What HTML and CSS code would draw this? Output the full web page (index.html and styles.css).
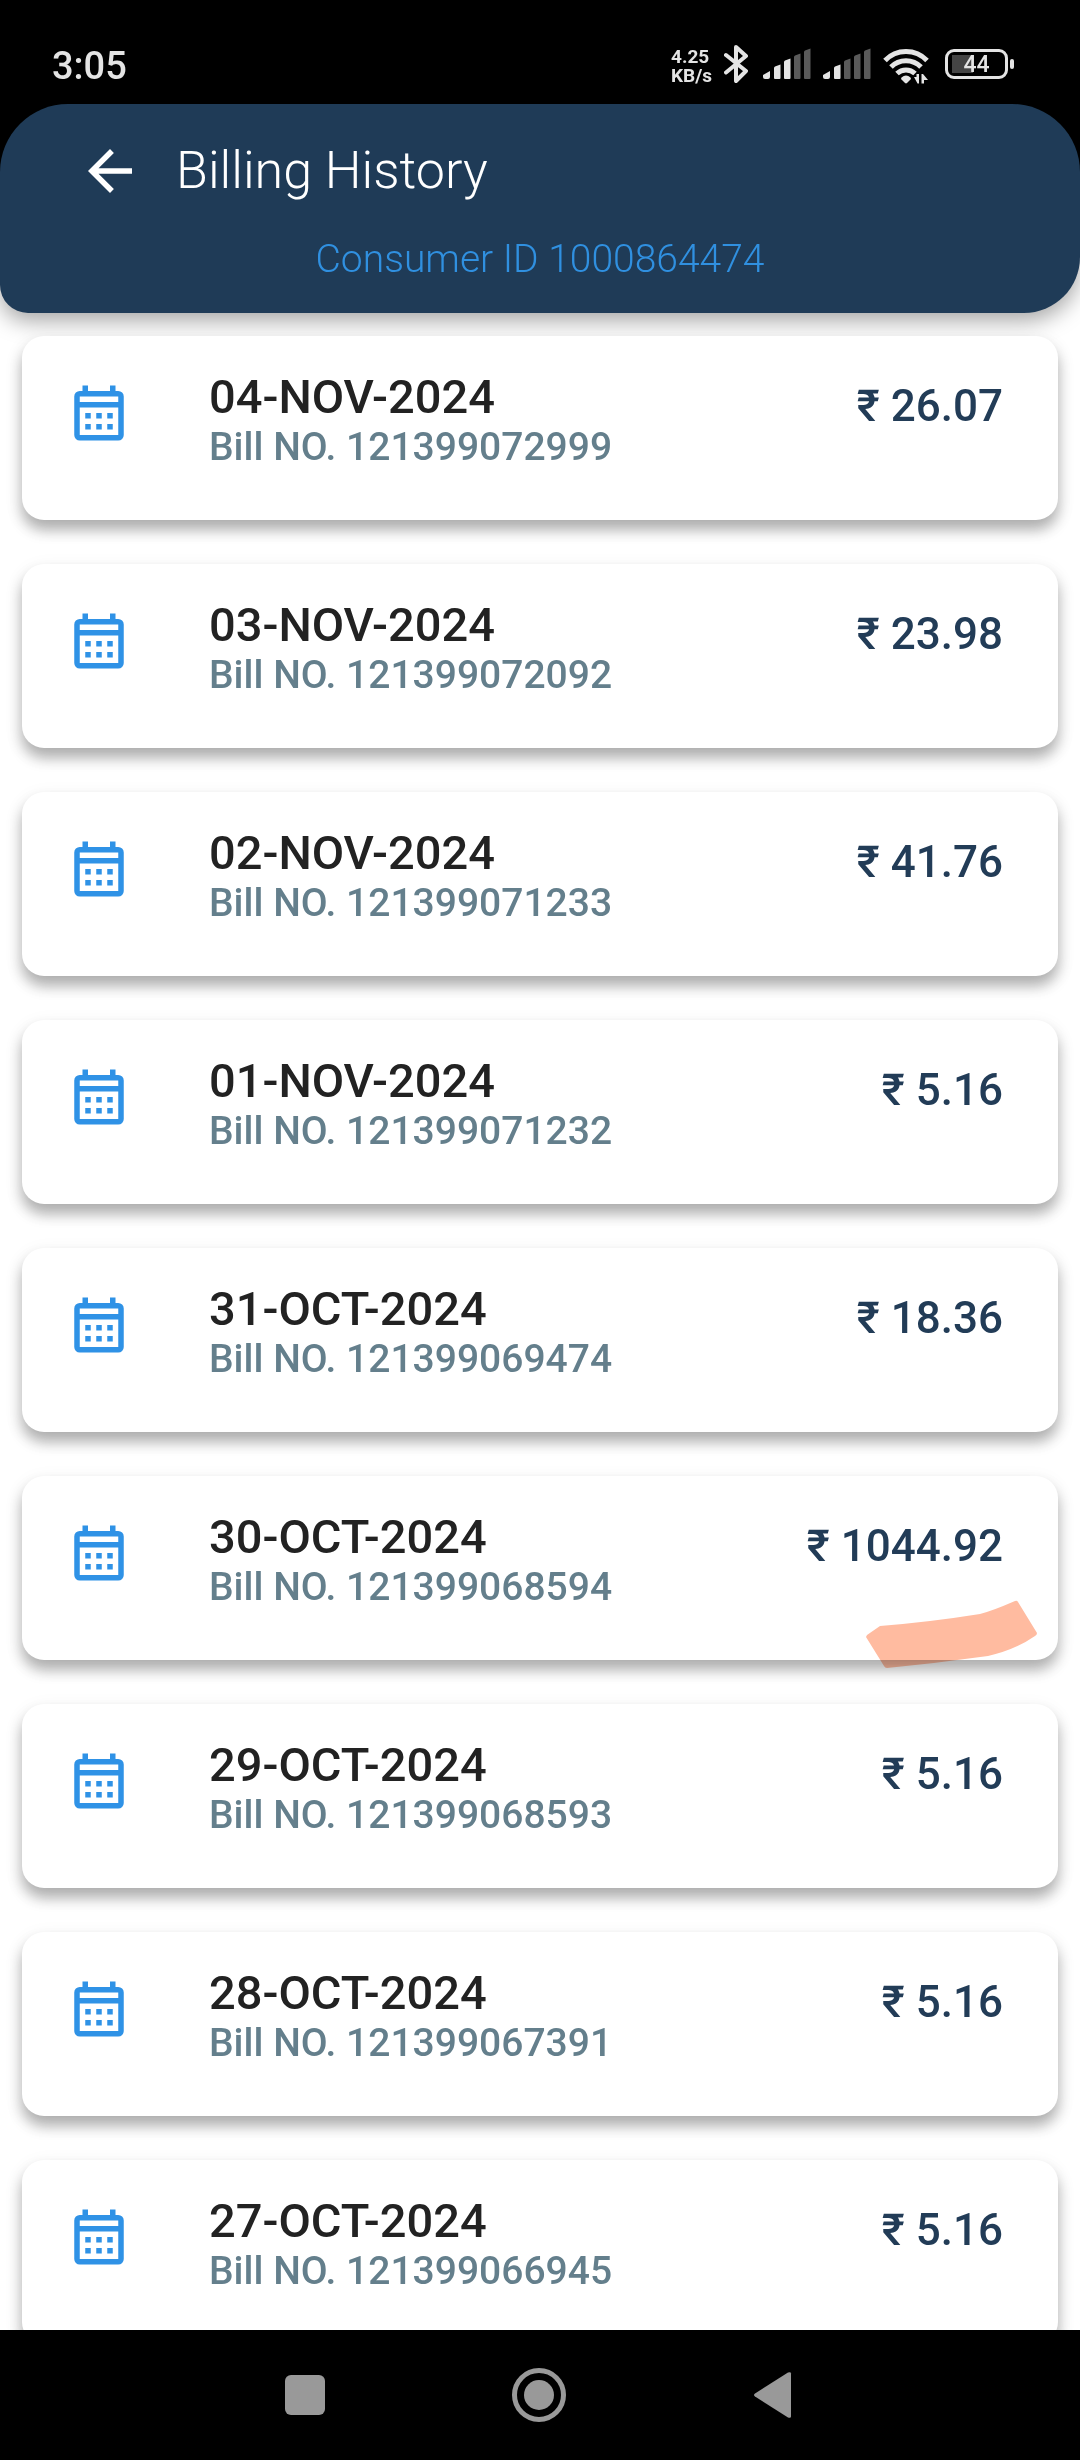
FILE: index.html
```html
<!DOCTYPE html>
<html lang="en">
<head>
<meta charset="utf-8">
<meta name="viewport" content="width=device-width, initial-scale=1">
<title>Billing History</title>
<link rel="stylesheet" href="styles.css">
</head>
<body>
<svg class="defs" width="0" height="0" aria-hidden="true">
  <symbol id="calendar" viewBox="0 0 24 24">
    <path d="M9 12v2H7v-2h2m4 0v2h-2v-2h2m4 0v2h-2v-2h2m-8 4v2H7v-2h2m4 0v2h-2v-2h2m4 0v2h-2v-2h2M5 4h1V2h2v2h8V2h2v2h1a2 2 0 0 1 2 2v14a2 2 0 0 1-2 2H5a2 2 0 0 1-2-2V6a2 2 0 0 1 2-2m14 16V10H5v10h14m0-12V6H5v2h14z"/>
  </symbol>
  <symbol id="bars" viewBox="0 0 48 32">
    <path class="b1" d="M0 27l7-4v6q0 2-2 2H2q-2 0-2-2z"/>
    <path class="b2" d="M11 20q0-1 1-1.500l5.500-2V30q0 1-1 1H12q-1 0-1-1z"/>
    <path class="b3" d="M21 14q0-1 1-1.500l5.500-2V30q0 1-1 1H22q-1 0-1-1z"/>
    <path class="b4" d="M31 9q0-1 1-1.500l5.500-2V30q0 1-1 1H32q-1 0-1-1z"/>
    <path class="b5" d="M41 4q0-1 1-1.500l5.500-2V30q0 1-1 1H42q-1 0-1-1z"/>
  </symbol>
</svg>

<div class="status">
  <time class="clock">3:05</time>
  <div class="speed"><span>4.25</span><span>KB/s</span></div>
  <svg class="bluetooth" viewBox="0 0 24 40" width="24" height="40"><path d="M2 11l20 16-10 10V3l10 9L2 28.500" fill="none" stroke="#e4e4e4" stroke-width="4" stroke-linejoin="round" stroke-linecap="round"/></svg>
  <svg class="signal three" width="48" height="32"><use href="#bars"/></svg>
  <svg class="signal two" width="48" height="32"><use href="#bars"/></svg>
  <svg class="wifi" viewBox="0 0 46 36" width="46" height="36">
    <g fill="none" stroke="#e4e4e4" stroke-width="5">
      <path d="M2 12.500a29 29 0 0 1 42 0"/><path d="M8 19a21 21 0 0 1 30 0"/><path d="M14 25.500a13 13 0 0 1 18 0"/>
    </g>
    <path d="M18.500 29.500q4.500-4 9 0L28 31l-4 4q-1 .8-2 0l-4-4z" fill="#e4e4e4"/>
    <path d="M31 29h2.500v-3H36v9.500h-1.500zM38.500 26H40l5 6h-4v3.500h-2.500z" fill="#e4e4e4"/>
  </svg>
  <div class="battery"><span>44</span></div>
</div>

<header class="top">
  <div class="bar">
    <button class="back" type="button" aria-label="Back"><svg viewBox="0 0 24 24" width="66" height="66"><path fill="#fff" d="M20 11H7.830l5.590-5.590L12 4l-8 8 8 8 1.410-1.410L7.830 13H20v-2z"/></svg></button>
    <h1>Billing History</h1>
  </div>
  <p class="consumer">Consumer ID 1000864474</p>
</header>

<main class="screen">
<ul class="bills">
  <li class="bill"><svg class="cal"><use href="#calendar"/></svg><div class="info"><h2>04-NOV-2024</h2><p>Bill NO. 121399072999</p></div><span class="amount">₹ 26.07</span></li>
  <li class="bill"><svg class="cal"><use href="#calendar"/></svg><div class="info"><h2>03-NOV-2024</h2><p>Bill NO. 121399072092</p></div><span class="amount">₹ 23.98</span></li>
  <li class="bill"><svg class="cal"><use href="#calendar"/></svg><div class="info"><h2>02-NOV-2024</h2><p>Bill NO. 121399071233</p></div><span class="amount">₹ 41.76</span></li>
  <li class="bill"><svg class="cal"><use href="#calendar"/></svg><div class="info"><h2>01-NOV-2024</h2><p>Bill NO. 121399071232</p></div><span class="amount">₹ 5.16</span></li>
  <li class="bill"><svg class="cal"><use href="#calendar"/></svg><div class="info"><h2>31-OCT-2024</h2><p>Bill NO. 121399069474</p></div><span class="amount">₹ 18.36</span></li>
  <li class="bill"><svg class="cal"><use href="#calendar"/></svg><div class="info"><h2>30-OCT-2024</h2><p>Bill NO. 121399068594</p></div><span class="amount">₹ 1044.92</span>
    <svg class="marker" viewBox="0 0 172 68" width="172" height="68" aria-hidden="true"><path d="M1 35l13-9q50-4 100-12 12-3 35-13 2-1 3 1l19 31q0 2-2 3-20 14-47 20-50 7-101 12-2 0-3-2L0 37z"/></svg></li>
  <li class="bill"><svg class="cal"><use href="#calendar"/></svg><div class="info"><h2>29-OCT-2024</h2><p>Bill NO. 121399068593</p></div><span class="amount">₹ 5.16</span></li>
  <li class="bill"><svg class="cal"><use href="#calendar"/></svg><div class="info"><h2>28-OCT-2024</h2><p>Bill NO. 121399067391</p></div><span class="amount">₹ 5.16</span></li>
  <li class="bill"><svg class="cal"><use href="#calendar"/></svg><div class="info"><h2>27-OCT-2024</h2><p>Bill NO. 121399066945</p></div><span class="amount">₹ 5.16</span></li>
</ul>
</main>

<nav class="system" aria-label="System navigation">
  <button type="button" aria-label="Recent apps"><svg viewBox="0 0 60 60" width="60" height="60"><rect x="10" y="10" width="40" height="40" rx="6"/></svg></button>
  <button type="button" aria-label="Home"><svg viewBox="0 0 60 60" width="60" height="60"><circle cx="30" cy="30" r="24.500" fill="none" stroke="#999" stroke-width="5"/><circle cx="30" cy="30" r="15"/></svg></button>
  <button type="button" aria-label="Back"><svg viewBox="0 0 60 60" width="60" height="60"><path d="M12 28.500L45 7.500q3-1 3 1v43q0 2-3 1L12 31.500q-2-1.500 0-3z"/></svg></button>
</nav>
</body>
</html>
```
FILE: styles.css
```css
* { box-sizing: border-box; }

body {
  margin: 0;
  height: 100vh;
  display: flex;
  flex-direction: column;
  background: #fff;
  font-family: Roboto, "Noto Sans", sans-serif;
}

h1, h2, p, ul { margin: 0; padding: 0; }
button { padding: 0; border: 0; background: none; cursor: pointer; }
svg { display: block; flex: none; }
.defs { position: absolute; }

/* phone status bar */
.status {
  flex: none;
  height: 172px;
  margin-bottom: -68px;
  padding: 44px 72px 0 52px;
  display: flex;
  align-items: flex-start;
  gap: 12px;
  background: #000;
  color: #e4e4e4;
}
.clock {
  margin-right: auto;
  font-size: 38px;
  line-height: 44px;
  font-weight: 500;
}
.speed {
  display: flex;
  flex-direction: column;
  font-size: 19px;
  line-height: 19px;
  font-weight: 700;
  padding-top: 3px;
}
.signal, .wifi { margin-top: 4px; }
.bluetooth { margin-right: 3px; }
.signal { fill: #5a5a5a; }
.three { --third: #e4e4e4; }
.b1, .b2 { fill: #e4e4e4; }
.b3 { fill: var(--third, #5a5a5a); }
.battery {
  position: relative;
  width: 63px;
  height: 30px;
  margin: 5px 0 0 4px;
  border: 3px solid #e4e4e4;
  border-radius: 9px;
  background: linear-gradient(#444, #444) 4px 3px / 21px 18px no-repeat;
  font-size: 23px;
  line-height: 26px;
  font-weight: 500;
  text-align: center;
}
.battery::after {
  content: "";
  position: absolute;
  left: 62px;
  top: 7px;
  width: 4px;
  height: 10px;
  border-radius: 2px;
  background: #e4e4e4;
}

/* app header */
.top {
  flex: none;
  position: relative;
  padding: 34px 77px 17px;
  border-radius: 68px 68px 56px 28px;
  background: #1f3b57;
  box-shadow: 0 8px 22px rgba(0, 0, 0, .35);
}
.bar { display: flex; align-items: center; gap: 33px; }
h1 {
  font-size: 52px;
  line-height: 66px;
  font-weight: 300;
  color: #fff;
}
.consumer {
  margin-top: 32px;
  padding-bottom: 14px;
  font-size: 39px;
  line-height: 46px;
  font-weight: 300;
  text-align: center;
  color: #3090e0;
}

/* bill list */
.screen { flex: 1; min-height: 0; overflow: hidden; }
.bills {
  list-style: none;
  padding: 23px 22px;
  display: flex;
  flex-direction: column;
  gap: 44px;
}
.bill {
  position: relative;
  display: flex;
  align-items: flex-start;
  min-height: 184px;
  padding: 34px 55px 34px 44px;
  border-radius: 22px;
  background: #fff;
  box-shadow: 0 10px 14px rgba(0, 0, 0, .28), 0 6px 20px rgba(0, 0, 0, .08);
}
.cal {
  width: 66px;
  height: 66px;
  margin: 10px 77px 0 0;
  fill: #2f92e6;
}
.info { flex: 1; }
h2 {
  font-size: 47px;
  line-height: 54px;
  font-weight: 500;
  color: #222;
}
.info p {
  font-size: 39px;
  line-height: 46px;
  font-weight: 500;
  color: #647f8c;
}
.amount {
  margin-top: 10px;
  font-size: 44px;
  line-height: 52px;
  font-weight: 500;
  color: #223c57;
}
.marker {
  position: absolute;
  right: 20px;
  bottom: -8px;
  fill: #ffbba0;
  mix-blend-mode: multiply;
}

/* phone navigation bar */
.system {
  flex: none;
  position: relative;
  height: 130px;
  padding-right: 2px;
  display: flex;
  justify-content: center;
  align-items: center;
  gap: 174px;
  background: #000;
}
.system svg { fill: #999; }
```
